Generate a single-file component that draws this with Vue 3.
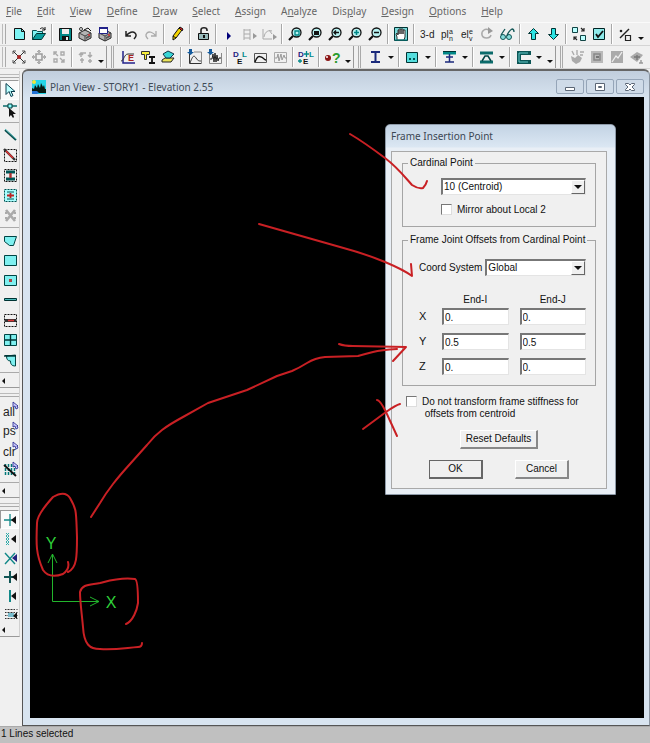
<script setup>
import { ref, reactive } from 'vue'

const menus = ['File', 'Edit', 'View', 'Define', 'Draw', 'Select', 'Assign', 'Analyze', 'Display', 'Design', 'Options', 'Help']
const accelerators = { Analyze: 1, Display: 3 }
const menuItems = menus.map((name) => {
  const i = accelerators[name] ?? 0
  return { name, before: name.slice(0, i), key: name[i], after: name.slice(i + 1) }
})

const magnifier = '<circle cx="9.500" cy="6.500" r="4.500" fill="#b9f2f2" stroke="#111" stroke-width="1.300"/><path d="M6 10 2 14" stroke="#111" stroke-width="2.200"/>'
const printer = '<path d="M2 7 8 4l6 3v5l-6 3-6-3z" fill="#b4b4b4" stroke="#222"/><path d="M2 7l6 3 6-3M8 10v5" stroke="#444" fill="none"/><path d="M9 11l4-2v2l-4 2z" fill="#555"/><circle cx="12" cy="9" r="1" fill="#d33"/>'
const cursorBadge = '<path d="M11 0v5l2-1 1 3 2-1-1-2h1z" fill="#ccf" stroke="#22228a" stroke-width=".8"/>'
const line = (d, color = '#111', w = 1) => `<path d="${d}" fill="none" stroke="${color}" stroke-width="${w}"/>`
const fill = (d, color, stroke = 'none') => `<path d="${d}" fill="${color}" stroke="${stroke}"/>`
const glyph = (t, x, y, size, color = '#222', weight = 400) => `<text x="${x}" y="${y}" font-size="${size}" font-weight="${weight}" fill="${color}">${t}</text>`

const icons = {
  new: fill('M3.500 2.500h7l3 3v8h-10z', '#7ff4f4', '#111') + line('M10.500 2.500v3h3'),
  open: fill('M1.500 13.500v-9h4l1 1h5v2', '#7ff4f4', '#064f4f') + fill('M1.500 13.500l4-6h9l-4 6z', '#0aa0a0', '#033') + line('M9 3c2-2 4-1 5 1m0-3v3h-3'),
  save: fill('M2.500 2.500h12v12h-12z', '#088', '#111') + fill('M5 3h7v5H5z', '#eee') + fill('M5 10h7v4H5z', '#111') + fill('M9 11h2v3H9z', '#eee'),
  print: printer + '<circle cx="4" cy="3" r="1.500" fill="none" stroke="#333"/>' + line('M7 4l4-2 3 3'),
  preview: printer + fill('M2.500 1.500h8v6h-8z', '#fff', '#22228a') + fill('M2 1h9v2H2z', '#22228a'),
  undo: line('M3 5v5h5M3 10c3-4 7-5 9-3s1 4-1 6', '#222', 1.5),
  redo: line('M13 5v5H8m5 0C10 6 6 5 4 7s-1 4 1 6', '#aaa', 1.3),
  pencil: fill('M4 10l6-8 3 2-6 8-3 2z', '#f5d500', '#111') + fill('M10 2l1-1 3 2-1 2z', '#d22', '#111') + line('M4 10l3 2', '#111'),
  lock: fill('M3.500 7.500h10v6h-10z', '#9bb', '#111') + line('M6 7V4c0-3 6-3 6 0v1', '#222', 1.6) + fill('M8 9h2v3H8z', '#111'),
  run: fill('M6 6l4 4-4 4z', '#00007a'),
  frameRun: line('M3 3v11M9 3v11M3 4h6M3 8h6M3 12h6', '#aaa') + fill('M12 7l4 3-4 3z', '#999'),
  curveRun: line('M2 3v10h9M3 11c1-6 5-7 8-6M8 4l3 4', '#aaa') + fill('M12 8l4 3-4 3z', '#999'),
  zoomWindow: magnifier + line('M8 5h4v4H8z', '#088', 1.3),
  zoomAll: magnifier + fill('M7 5h5v4H7z', '#111'),
  zoomPrev: magnifier + line('M12 6.500H7m2-2-2 2 2 2', '#111', 1.4),
  zoomIn: magnifier + line('M7 6.500h5M9.500 4v5', '#088', 1.6),
  zoomOut: magnifier + line('M7 6.500h5', '#111', 1.5),
  pan: fill('M1.500 1.500h13v13h-13z', '#7adada', '#033') + fill('M4 14v-3L3 8l1-1 1 2V4h1v4-5h2v5-5h2v5-4h2v7l-1 3z', '#fff', '#333') + line('M2 14h12', '#088', 1),
  threeD: glyph('3-d', 1, 12, 10),
  plan: glyph('pl', 2, 12, 10) + glyph('a', 10, 8, 7) + glyph('n', 10, 15, 7),
  elev: glyph('el', 2, 12, 10) + glyph('e', 10, 8, 7) + glyph('v', 10, 15, 7),
  rotate: line('M10 4C6 2 2 5 3 9c1 4 8 4 9 0', '#aaa', 1.5) + fill('M9 1l5 4-5 3z', '#999'),
  glasses: '<circle cx="4" cy="11" r="2.500" fill="#8dd" stroke="#155"/><circle cx="10" cy="11" r="2.500" fill="#8dd" stroke="#155"/>' + line('M2 9l4-6M8 10c0-2 3-6 5-7 2 0 2 2 2 3', '#155', 1.3),
  up: fill('M8.500 2.500l5 5h-3v6h-4v-6h-3z', '#2de3e3', '#033'),
  down: fill('M8.500 13.500l5-5h-3v-6h-4v6h-3z', '#2de3e3', '#033'),
  shrink: fill('M1.500 1.500h5v5h-5zM9.500 9.500h5v5h-5z', '#bff', '#144') + line('M10 2l3 3m0-3v3h-3M6 14l-3-3m0 3v-3h3', '#222', 1.2),
  check: fill('M2.500 2.500h11v11h-11z', '#8eeaea', '#022') + line('M5 8l2 3 5-6', '#111', 1.8),
  snapSet: line('M3 12L12 3', '#222', 1.4) + '<circle cx="4" cy="5" r="1.300" fill="#222"/>' + line('M8.500 9.500h5v5h-5z', '#222', 1.2),

  joint: line('M2 2l12 12M14 2 2 14', '#333', 1) + line('M2 5V2h3M11 2h3v3M2 11v3h3m6 0h3v-3', '#555') + '<circle cx="8" cy="8" r="2" fill="#a22"/>',
  target: line('M5 5h6v6H5zM8 1v3M8 12v3M1 8h3M12 8h3', '#999', 1.5) + line('M6 3l2-2 2 2M6 13l2 2 2-2M3 6 1 8l2 2M13 6l2 2-2 2', '#aaa'),
  mesh: line('M3 6V3h3M3 3l4 4M10 3h3v3h-3zM3 10h3v3H3zM13 10v3h-3M9 9l4 4', '#aaa', 1.4),
  swap: line('M4 8V4h5M2 6l2-2 2 2M13 3v5m-2-2 2 2 2-2M3 11h4M5 9v5M11 12h4M13 10v4', '#aaa', 1.5),
  chart: line('M3 2v12h12', '#22228a', 1.5) + line('M1 12c3 0 3-7 7-7h6', '#333') + glyph('E', 8, 12, 9, '#a22', 700),
  sections: fill('M1.500 2.500h8v3h-3v5h-2v-5h-3z', '#f6ee3b', '#333') + line('M9 8h6M12 8v6M9 14h6', '#111', 1.8),
  stack: fill('M2 11l3-2h9l-3 4H2z', '#eae35a', '#222') + fill('M3 5l5-3 6 3-4 4H6z', '#39d6d6', '#134'),
  spectrum: line('M3.500 4v10.500h12M4 14c3-8 4-8 6-5s3 3 5 3', '#333') + line('M15.500 14V3H8', '#888') + fill('M3 0h3v3h2L4.500 6 1 3h2z', '#145a9c'),
  history: line('M3.500 5v9.500h12V4', '#888') + line('M4 10h2l1-5 1 8 1-9 1 9 1-7 1 6 1-3h2', '#222') + fill('M3 0h3v3h2L4.500 6 1 3h2z', '#145a9c'),
  dle: glyph('D', 1, 8, 8, '#22227e', 700) + glyph('L', 10, 8, 8, '#088', 700) + glyph('E', 5, 15, 8, '#111', 700),
  hump: line('M2.500 4.500h12v9h-12z', '#555') + line('M3 13c2-6 4-6 6-5 2 0 3 3 5 3', '#111', 1.3),
  wave: line('M2.500 3.500h12v10h-12z', '#aaa') + line('M3 9h2l1-4 1 7 2-7 1 6 2-5 1 3h2', '#999'),
  dleAdd: glyph('D', 0, 8, 8, '#22227e', 700) + glyph('L', 11, 8, 8, '#088', 700) + glyph('E', 5, 15, 8, '#111', 700) + line('M6 5h5M8.500 2v6M0 12h4M2 10v4', '#088', 1.3),
  help: '<circle cx="4" cy="9" r="3" fill="#8b1515"/><circle cx="3" cy="8" r="1" fill="#fff"/>' + glyph('?', 8, 14, 14, '#2c9b2c', 700),
  iBeam: line('M4 3h9M8.500 3v10M4 13h9', '#1b2a7c', 2),
  wall: fill('M2.500 3.500h11v10h-11z', '#55dede', '#033') + fill('M5 9h2v2H5zM9 9h2v2H9z', '#055'),
  tee: line('M2 4h13', '#088', 3) + line('M2 2.500h13', '#033', 1) + line('M8.500 5v8M5 8h7M4 13h9', '#1b2a7c', 1.5),
  slab: line('M2 4h13', '#0b6b6b', 3) + line('M2 13h13', '#0b6b6b', 3) + line('M4 12l3-5h3l3 5', '#044', 1.5),
  channel: line('M14 6V4H4v9h10v-2', '#0b5555', 4) + line('M13 4H4v9h9', '#6cc', 1),
  asg1: fill('M2 7l4 2 3-3 4 3-2 4-4 2-4-3z', '#aaa') + line('M3 2l2 4M8 1v5M11 3h4M11 6h3', '#aaa', 1.4),
  asg2: fill('M2 2h12v12H2z', '#b9b9b9') + line('M5 5h6v6H5z', '#888', 1.5) + fill('M7 7h3v2H7z', '#777'),
  asg3: fill('M2 2h12v12H2z', '#aaa') + line('M3 13l4-6 2 2 4-6', '#eee', 1.3),
  asg4: fill('M1 8l7-5 6 3-6 7z', '#aaa') + line('M5 8h6M8 6v5', '#777', 1.4) + line('M12 11v3M10 14h4', '#999', 1.4),

  pointer: fill('M4 1.500v11l3-3 2 5 2-1-2-4h4z', '#bff', '#0a3c4c'),
  reshape: line('M1 4h14', '#0b6b6b', 1.5) + fill('M6 2h4v4H6z', '#8ff', '#033') + fill('M7 6v9l2-2 2 3 1-1-1-3h3z', '#111'),
  drawLine: line('M3 3l11 10', '#0b4c4c', 2) + line('M3 2l11 10', '#5bb', 1),
  quickLine: '<rect x="2.500" y="2.500" width="12" height="12" fill="none" stroke="#111" stroke-dasharray="2 1"/>' + line('M2 2l11 11', '#333', 2.4) + line('M4 4l7 7', '#d33', 1.6),
  quickCol: '<rect x="2.500" y="2.500" width="12" height="12" fill="none" stroke="#111" stroke-dasharray="2 1"/>' + line('M4 5h9M4 12h9', '#055', 3) + line('M8.500 6v5', '#a33', 2.4),
  brace: '<rect x="2.500" y="2.500" width="12" height="12" fill="#aff" stroke="#055" stroke-dasharray="2 1"/>' + line('M5 5h7M5 12h7', '#055', 1) + line('M5 8.500h7M8.500 6v5', '#b22', 1.8),
  xGray: line('M4 3l9 11M13 3 4 14', '#aaa', 2.6) + line('M3 6h2M12 6h2M3 11h2M12 11h2', '#aaa', 2),
  area: fill('M2.500 4.500h12l-3 9h-4l-5-4z', '#7ff0f0', '#044'),
  rect: fill('M2.500 3.500h12v10h-12z', '#7ff0f0', '#044'),
  rectDot: fill('M2.500 3.500h12v10h-12z', '#7ff0f0', '#044') + fill('M7 7h3v3H7z', '#a44'),
  wallLine: fill('M2.500 6.500h12v2h-12z', '#4bbcbc', '#033'),
  wallDash: '<rect x="2.500" y="2.500" width="12" height="12" fill="none" stroke="#111" stroke-dasharray="2 1"/>' + line('M3 8.500h11', '#333', 3) + line('M6 8.500h6', '#d33', 1.5),
  window: fill('M2.500 2.500h12v11h-12z', '#7ff0f0', '#044') + line('M8.500 3v10M3 8h11', '#033', 1.4),
  quarter: fill('M3 3.500h11M13.500 3v11c-4 0-5-2-5-5-3 0-4-2-4-5z', '#7ff0f0', '#044') + line('M2 4h12', '#033', 1.4),
  all: glyph('all', 1, 14, 12) + cursorBadge,
  ps: glyph('ps', 1, 13, 12) + cursorBadge,
  clr: glyph('clr', 1, 14, 12) + cursorBadge,
  hatch: '<path d="M3.500 2v12M6.500 2v12M9.500 2v12M12.500 2v12" stroke="#077" stroke-width="1.500" stroke-dasharray="3 1" fill="none"/>' + line('M2 3l12 11', '#111', 1.8) + cursorBadge,
  snap1: line('M2 8h10M8 2v12', '#188', 1.3) + fill('M14 4v8l-5-4z', '#111'),
  snap2: line('M4 2l3 3-3 3 3 3-3 3M7 2 4 5l3 3-3 3 3 3', '#3aa') + fill('M14 4v8l-5-4z', '#111'),
  snap3: line('M3 3l10 11M13 3 3 14', '#188', 1.4) + fill('M15 4v8l-5-4z', '#22227e'),
  snap4: line('M2 8h11M8 2v12', '#155', 2) + fill('M15 4v8l-5-4z', '#111'),
  snap5: line('M8 2v12', '#188', 2) + fill('M14 4v8l-5-4z', '#111'),
  snap6: '<path d="M3.500 2v12M6.500 2v12M9.500 2v12M12.500 2v12M15 2v12M5 2v12M8 2v12M11 2v12" stroke="#333" stroke-dasharray="1 2"/>' + fill('M6 6h6v4H6z', '#7bc') + fill('M15 5v7l-4-3z', '#111'),
}

const topRow = 'new open | save print preview | undo redo | pencil | lock | run frameRun curveRun | zoomWindow zoomAll zoomPrev zoomIn zoomOut | pan | threeD plan elev rotate glasses | up down | shrink check | snapSet >'.split(' ')
const secondRow = 'joint target mesh | swap > # chart sections stack | spectrum history | dle hump wave | dleAdd | help > # iBeam v | wall v | tee v | slab v | channel v > # asg1 asg2 asg3 asg4'.split(' ')
const drawBar = 'pointer reshape | drawLine quickLine quickCol brace xGray | area rect rectDot wallLine wallDash window quarter |'.split(' ')
const selectBar = 'all ps clr hatch |'.split(' ')
const snapBar = 'snap1 snap2 snap3 snap4 snap5 snap6'.split(' ')
const rails = [
  { id: 'draw', items: drawBar },
  { id: 'select', items: selectBar },
  { id: 'snap', items: snapBar },
]

const cardinal = ref('10 (Centroid)')
const mirror = ref(false)
const coord = ref('Global')
const keepStiffness = ref(false)
const offsets = reactive([
  { axis: 'X', i: '0.', j: '0.' },
  { axis: 'Y', i: '0.5', j: '0.5' },
  { axis: 'Z', i: '0.', j: '0.' },
])
</script>

<template>
  <div class="app">
    <nav class="menubar">
      <button v-for="m in menuItems" :key="m.name" class="menu">{{ m.before }}<u>{{ m.key }}</u>{{ m.after }}</button>
    </nav>

    <div v-for="(row, r) in [topRow, secondRow]" :key="r" class="toolbar">
      <span class="grip"></span>
      <template v-for="(t, k) in row" :key="k">
        <span v-if="t === '|'" class="sep"></span>
        <span v-else-if="t === '#'" class="break"></span>
        <button v-else-if="t === '>' || t === 'v'" class="caret" :class="{ low: t === '>' }" aria-label="More"></button>
        <button v-else class="tool" :aria-label="t"><svg viewBox="0 0 16 16" v-html="icons[t]"></svg></button>
      </template>
    </div>

    <main class="workspace">
      <aside class="rail">
        <div v-for="bar in rails" :key="bar.id" class="railbar" :class="bar.id">
          <span class="railgrip"></span>
          <template v-for="(t, k) in bar.items" :key="k">
            <span v-if="t === '|'" class="railsep"></span>
            <button v-else class="tool" :class="{ on: t === 'pointer' || t === 'snap1' }" :aria-label="t"><svg viewBox="0 0 16 16" v-html="icons[t]"></svg></button>
          </template>
          <button class="railcaret" aria-label="More"></button>
        </div>
      </aside>

      <section class="child">
        <header class="titlebar">
          <svg class="logo" viewBox="0 0 14 14">
            <path d="M0 0h14v14H0z" fill="#25d5e8" />
            <path d="M0 13V8l2 1 1-4 2 3 1-4 2 4 1-5 2 4 1-2 1 4h1v4z" fill="#061a12" />
            <circle cx="2" cy="2" r="2" fill="#f2e53a" />
            <path d="M0 11h5l2 2-2 1H0z" fill="#2273d8" />
          </svg>
          <h1>Plan View - STORY1 - Elevation 2.55</h1>
          <div class="winbtns">
            <button aria-label="Minimize"><svg viewBox="0 0 12 10"><path d="M1.500 5.500h9v3h-9z" fill="#fff" stroke="#5b6675" /></svg></button>
            <button aria-label="Restore"><svg viewBox="0 0 12 10"><path d="M1.500 1.500h9v7h-9z" fill="#fff" stroke="#5b6675" /><path d="M4.500 4.500h3v1h-3z" fill="none" stroke="#5b6675" /></svg></button>
            <button aria-label="Close"><svg viewBox="0 0 12 10"><path d="M1.500 1.500h3L6 3l1.500-1.500h3v1L8 5l2.500 2.500v1h-3L6 7 4.500 8.500h-3v-1L4 5 1.500 2.500z" fill="#fff" stroke="#5b6675" /></svg></button>
          </div>
        </header>

        <div class="canvas">
          <svg class="ink" viewBox="30 97 614 621">
            <g class="axes">
              <path d="M52.500 601.500V554M48 563l4.500-9 4.500 9M52.500 601.500H99M90 597l9 4.500-9 4.500" />
              <text x="51" y="549">Y</text>
              <text x="111" y="608">X</text>
            </g>
          </svg>

          <form class="dialog" @submit.prevent>
            <h2>Frame Insertion Point</h2>
            <div class="panel">
              <fieldset class="cardinal">
                <legend>Cardinal Point</legend>
                <div class="combo">
                  <select v-model="cardinal" aria-label="Cardinal Point"><option>10 (Centroid)</option></select>
                  <span class="drop"></span>
                </div>
                <label class="tick"><input v-model="mirror" type="checkbox" /><span>Mirror about Local 2</span></label>
              </fieldset>

              <fieldset class="joints">
                <legend>Frame Joint Offsets from Cardinal Point</legend>
                <div class="coord">
                  <label for="coord">Coord System</label>
                  <div class="combo">
                    <select id="coord" v-model="coord"><option>Global</option></select>
                    <span class="drop"></span>
                  </div>
                </div>
                <div class="grid">
                  <span></span><span class="head">End-I</span><span class="head">End-J</span>
                  <template v-for="o in offsets" :key="o.axis">
                    <label class="axis" :for="'end-i-' + o.axis">{{ o.axis }}</label>
                    <input :id="'end-i-' + o.axis" v-model="o.i" type="text" />
                    <input v-model="o.j" type="text" :aria-label="o.axis + ' End-J'" />
                  </template>
                </div>
              </fieldset>

              <label class="tick stiffness">
                <input v-model="keepStiffness" type="checkbox" />
                <span>Do not transform frame stiffness for<br />&nbsp;offsets from centroid</span>
              </label>
              <button type="button" class="push reset">Reset Defaults</button>
              <div class="actions">
                <button type="submit" class="push default">OK</button>
                <button type="button" class="push">Cancel</button>
              </div>
            </div>
          </form>

          <svg class="ink marks" viewBox="30 97 614 621">
            <path d="M350 134C362 141 373 149 385 158S404 176 412 185Q418 189 423 188Q426 185 427 181" />
            <path d="M259 224L340 247Q366 254 385 262T412 276L411 264" />
            <path d="M91 517L100 503Q106 493 113 484T130 464L147 445Q154 436 162 430T183 417L208 403Q226 397 247 390L277 376 292 371Q299 368 307 363T325 357L358 356Q365 354 373 352T397 349" />
            <path d="M339 344Q344 346 353 346L406 347 393 361" />
            <path d="M377 400Q380 400 386 412L397 436M400 404Q396 405 386 412L363 429" />
            <path d="M68 562Q70 569 63 574 49 579 43 570C36 554 36 545 37 523 37 516 43 508 53 497Q65 490 70 498C77 510 76 512 77 537 77 556 77 568 68 572" />
            <path d="M126 624C133 621 137 610 138 603 138 595 138 580 135 579 120 577 108 581 100 583 90 585 82 584 80 592 80 602 82 615 83 627 84 645 90 649 100 649 115 650 125 648 138 647Q142 647 142 643" />
          </svg>
        </div>
      </section>
    </main>

    <footer class="status">1 Lines selected</footer>
  </div>
</template>

<style>
body {
  background: #f0f0f0;
}
</style>

<style scoped>
* {
  box-sizing: border-box;
}
.app {
  display: flex;
  flex-direction: column;
  min-height: 100vh;
  overflow: hidden;
  background: #f0f0f0;
  color: #111;
  font: 10px/12px "Liberation Sans", sans-serif;
}
button {
  margin: 0;
  padding: 0;
  border: 0;
  background: none;
  font: inherit;
  color: inherit;
}
.menubar {
  display: flex;
  gap: 15px;
  height: 23px;
  padding: 0 6px;
  border-bottom: 1px solid #fafafa;
}
.menu {
  font: 10px/22px "Noto Sans", sans-serif;
  color: #666;
}
.toolbar {
  display: flex;
  align-items: center;
  height: 23px;
  overflow: hidden;
  border-bottom: 1px solid #d4d4d4;
}
.grip {
  flex: none;
  width: 4px;
  height: 20px;
  margin: 0 3px 0 2px;
  border-right: 1px solid #aaa;
  border-left: 1px solid #bbb;
}
.tool {
  display: flex;
  flex: none;
  align-items: center;
  justify-content: center;
  width: 20px;
  height: 20px;
}
.tool svg {
  display: block;
  width: 16px;
  height: 16px;
  overflow: visible;
}
.sep {
  flex: none;
  width: 2px;
  height: 20px;
  margin: 0 2px;
  border-left: 1px solid #a8a8a8;
  border-right: 1px solid #fff;
}
.break {
  flex: none;
  width: 8px;
  height: 22px;
  margin: 0 4px 0 0;
  border-left: 1px solid #999;
  border-right: 1px solid #aaa;
  background: linear-gradient(90deg, #f0f0f0 4px, #aaa 4px, #aaa 5px, #f0f0f0 5px);
}
.caret {
  display: flex;
  flex: none;
  justify-content: center;
  width: 11px;
}
.caret::before {
  content: "";
  border: 3px solid transparent;
  border-top-color: #111;
  border-bottom: 0;
}
.caret.low {
  align-self: flex-end;
  padding-bottom: 5px;
}
.workspace {
  display: flex;
  flex: 1;
}
.rail {
  flex: none;
  width: 22px;
  padding-top: 2px;
}
.railbar {
  display: flex;
  flex-direction: column;
  width: 20px;
  border-right: 1px solid #d0d0d0;
  border-bottom: 1px solid #999;
}
.rail .tool {
  width: 19px;
}
.tool.on {
  border: 1px solid #fff;
  border-top-color: #999;
  border-left-color: #999;
  background: #fafafa;
}
.snap .tool {
  height: 19px;
}
.railgrip {
  height: 4px;
  margin: 3px 0 2px;
  border-top: 1px solid #bbb;
  border-bottom: 1px solid #aaa;
}
.select .railgrip,
.snap .railgrip {
  margin: 5px 0 3px;
}
.railsep {
  height: 1px;
  margin: 2px 0;
  background: #aaa;
}
.railcaret {
  display: flex;
  align-items: center;
  height: 12px;
  padding-left: 2px;
}
.railcaret::before {
  content: "";
  border: 3px solid transparent;
  border-right-color: #111;
  border-left: 0;
}
.child {
  display: flex;
  flex: 1;
  flex-direction: column;
  min-width: 0;
  padding: 0 5px 7px 7px;
  border: 1px solid #555;
  border-top: 2px solid #666;
  border-right-color: #8a94a0;
  border-radius: 6px 6px 0 0;
  background: linear-gradient(#c1cedd, #d8e4f0 28px);
}
.titlebar {
  display: flex;
  align-items: center;
  height: 26px;
  padding: 5px 0 0 2px;
}
.logo {
  width: 14px;
  height: 14px;
}
h1 {
  flex: 1;
  margin: 0 0 0 4px;
  font: 10px/14px "Noto Sans", sans-serif;
  color: #404b57;
}
.winbtns {
  display: flex;
  gap: 2px;
}
.winbtns button {
  display: flex;
  align-items: center;
  justify-content: center;
  width: 28px;
  height: 15px;
  border: 1px solid #95a5b8;
  border-radius: 2px;
  background: #cfdbe8;
}
.winbtns svg {
  width: 12px;
  height: 10px;
}
.canvas {
  position: relative;
  flex: 1;
  overflow: hidden;
  background: #000;
}
.ink {
  position: absolute;
  top: 0;
  left: 0;
  width: 614px;
  height: 621px;
  pointer-events: none;
}
.axes path {
  fill: none;
  stroke: #22b52c;
}
.axes text {
  fill: #2fd139;
  font-size: 16px;
  text-anchor: middle;
}
.marks path {
  fill: none;
  stroke: #c92024;
  stroke-width: 2;
  stroke-linecap: round;
  stroke-linejoin: round;
}
.dialog {
  position: absolute;
  top: 27px;
  left: 355px;
  width: 231px;
  padding: 0 8px 5px 5px;
  border: 1px solid #8e9aa8;
  border-radius: 5px 5px 0 0;
  background: linear-gradient(#c3d3e4, #dbe7f3 22px, #e9eff6 23px);
}
h2 {
  margin: 0;
  font: 10px/22px "Noto Sans", sans-serif;
  color: #3c4753;
}
.panel {
  display: flex;
  flex-direction: column;
  margin-top: 4px;
  padding: 5px 10px 9px;
  border: 1px solid #a9a9a9;
  background: #f0f0f0;
}
fieldset {
  min-width: 0;
  margin: 0;
  border: 1px solid #a5a5a5;
}
legend {
  margin-left: 5px;
  padding: 0 2px;
  white-space: nowrap;
}
.cardinal {
  padding: 9px 9px 10px 0;
}
.cardinal .combo,
.cardinal .tick {
  margin-left: 38px;
}
.joints {
  margin-top: 7px;
  padding: 13px 9px 10px 0;
}
.coord,
.grid {
  margin-left: 16px;
}
.combo {
  position: relative;
  flex: 1;
}
select,
input[type="text"] {
  display: block;
  width: 100%;
  min-width: 0;
  height: 17px;
  margin: 0;
  padding: 0 1px;
  border: 1px solid #e4e4e4;
  border-top: 2px solid #777;
  border-left: 2px solid #777;
  border-radius: 0;
  background: #fff;
  font: inherit;
  color: #111;
  appearance: none;
}
.drop {
  position: absolute;
  top: 2px;
  right: 1px;
  display: flex;
  align-items: center;
  justify-content: center;
  width: 14px;
  height: 14px;
  border: 1px solid #fff;
  border-right-color: #666;
  border-bottom-color: #666;
  background: #f0f0f0;
  pointer-events: none;
}
.drop::before {
  content: "";
  border: 4px solid transparent;
  border-top-color: #111;
  border-bottom: 0;
}
.tick {
  display: flex;
  gap: 5px;
  margin-top: 9px;
}
.tick input {
  flex: none;
  width: 11px;
  height: 11px;
  margin: 0;
  border: 1px solid #ddd;
  border-top-color: #777;
  border-left-color: #777;
  background: #fff;
  appearance: none;
}
.stiffness {
  margin: 10px 0 0 4px;
}
.coord {
  display: flex;
  align-items: center;
  gap: 3px;
}
.grid {
  display: grid;
  grid-template-columns: 12px 1fr 1fr;
  gap: 8px 11px;
  margin-top: 18px;
}
.head {
  height: 6px;
  line-height: 12px;
  text-align: center;
}
.axis {
  font-size: 11px;
  line-height: 17px;
}
.push {
  width: 54px;
  height: 19px;
  border: 1px solid #fff;
  border-right: 2px solid #888;
  border-bottom: 2px solid #888;
}
.push.default {
  border-color: #666;
}
.reset {
  align-self: center;
  width: 78px;
  margin-top: 10px;
}
.actions {
  display: flex;
  justify-content: space-between;
  margin-top: 11px;
  padding: 0 27px;
}
.status {
  height: 17px;
  padding-left: 1px;
  border-top: 1px solid #aaa;
  background: #c0c0c0;
  line-height: 14px;
}
</style>
